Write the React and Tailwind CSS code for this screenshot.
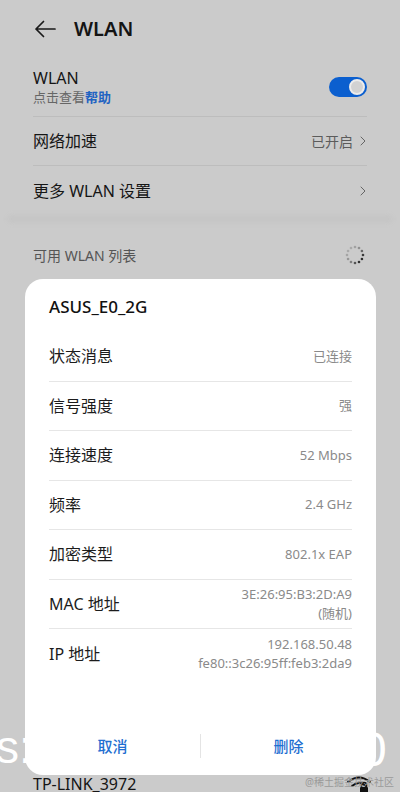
import { ChevronRight } from 'lucide-react';

const FONT = { fontFamily: '"Noto Sans", "Noto Sans CJK SC", sans-serif' };

const details = [
  { label: '状态消息', value: ['已连接'] },
  { label: '信号强度', value: ['强'] },
  { label: '连接速度', value: ['52 Mbps'] },
  { label: '频率', value: ['2.4 GHz'] },
  { label: '加密类型', value: ['802.1x EAP'] },
  { label: 'MAC 地址', value: ['3E:26:95:B3:2D:A9', '(随机)'] },
  { label: 'IP 地址', value: ['192.168.50.48', 'fe80::3c26:95ff:feb3:2da9'] },
];

function Spinner() {
  const shades = [0.25, 0.35, 0.6, 0.85, 0.95, 0.9, 0.7, 0.45, 0.3, 0.22, 0.2, 0.2];
  return (
    <svg width="22" height="22" viewBox="0 0 22 22">
      {shades.map((s, i) => {
        const a = (i / 12) * Math.PI * 2 - Math.PI / 2;
        return (
          <circle key={i} cx={11 + Math.cos(a) * 8} cy={11 + Math.sin(a) * 8} r={1.3} fill="#222" opacity={s} />
        );
      })}
    </svg>
  );
}

function Toggle() {
  return (
    <div className="w-[38px] h-[20px] rounded-full bg-[#0b5fcf] flex items-center justify-end pr-[2px]">
      <div className="w-[16px] h-[16px] rounded-full bg-[#d2d2d2] border-[2px] border-[#ececec]" />
    </div>
  );
}

function WifiLock() {
  return (
    <svg width="26" height="20" viewBox="0 0 26 20" fill="none">
      <path d="M2 8 Q13 -1 24 8" stroke="#111" strokeWidth="2" strokeLinecap="round" />
      <path d="M6 12 Q13 6 20 12" stroke="#111" strokeWidth="2" strokeLinecap="round" />
      <rect x="14" y="13" width="8" height="7" rx="1" fill="#111" />
      <path d="M15.5 13 v-2 a2.5 2.5 0 0 1 5 0 v2" stroke="#111" strokeWidth="1.6" />
    </svg>
  );
}

export default function App() {
  return (
    <div className="relative w-[400px] h-[792px] overflow-hidden bg-[#cbcbcb]" style={FONT}>
      {/* Header */}
      <div className="h-[58px] flex items-center pl-[34px]">
        <svg width="22" height="18" viewBox="0 0 22 18" fill="none">
          <path d="M21 9H2M9.5 1.5L2 9l7.5 7.5" stroke="#1a1a1a" strokeWidth="1.7" strokeLinecap="round" strokeLinejoin="round" />
        </svg>
        <span className="ml-[18px] text-[20px] font-semibold text-[#141414]">WLAN</span>
      </div>

      {/* Settings group */}
      <div className="px-[33px]">
        <div className="h-[59px] flex items-center justify-between border-b border-[#bdbdbd]">
          <div>
            <p className="text-[16px] leading-[20px] text-[#151515]">WLAN</p>
            <p className="text-[13px] leading-[18px] text-[#666]">
              点击查看<span className="text-[#1f63c2] font-semibold">帮助</span>
            </p>
          </div>
          <Toggle />
        </div>
        <div className="h-[49px] flex items-center justify-between border-b border-[#bdbdbd]">
          <span className="text-[16px] text-[#151515]">网络加速</span>
          <div className="flex items-center gap-[2px] text-[14px] text-[#5c5c5c] -mr-[4px]">
            已开启
            <ChevronRight className="w-[16px] h-[16px] text-[#666]" strokeWidth={1.5} />
          </div>
        </div>
        <div className="h-[49px] flex items-center justify-between">
          <span className="text-[16px] text-[#151515]">更多 WLAN 设置</span>
          <ChevronRight className="w-[16px] h-[16px] text-[#666] -mr-[4px]" strokeWidth={1.5} />
        </div>
      </div>
      <div className="mx-[8px] h-[8px] rounded-full bg-[#c5c5c5] blur-[2px]" />

      {/* Available list */}
      <div className="h-[64px] flex items-center justify-between pl-[33px] pr-[34px]">
        <span className="text-[14px] text-[#555]">可用 WLAN 列表</span>
        <Spinner />
      </div>
      {/* rows hidden behind the dialog */}
      <div className="h-[459px]" />
      <div className="pl-[33px] pr-[28px] h-[76px] flex items-center justify-between">
        <span className="text-[16px] text-[#151515]">TP-LINK_3972</span>
        <WifiLock />
      </div>

      {/* Detail dialog */}
      <div className="absolute left-[25px] top-[279px] w-[351px] h-[496px] rounded-[18px] bg-white flex flex-col px-[24px]">
        <div className="h-[53px] flex items-center pt-[3px]">
          <span className="text-[17px] font-medium text-[#111]">ASUS_E0_2G</span>
        </div>
        {details.map((d, i) => (
          <div
            key={d.label}
            className={`h-[49.5px] flex items-center justify-between ${i < details.length - 1 ? 'border-b border-[#e6e6e6]' : ''}`}
          >
            <span className="text-[16px] text-[#1c1c1c]">{d.label}</span>
            <div className="text-right text-[13px] leading-[19px] text-[#8a8a8a]">
              {d.value.map((v) => (
                <p key={v}>{v}</p>
              ))}
            </div>
          </div>
        ))}
        <div className="mt-auto h-[56px] flex items-center -mx-[24px] pb-[2px]">
          <button className="flex-1 text-[15px] font-medium text-[#1f6fd1]">取消</button>
          <div className="w-px h-[24px] bg-[#e4e4e4]" />
          <button className="flex-1 text-[15px] font-medium text-[#1f6fd1]">删除</button>
        </div>
      </div>

      {/* Watermarks */}
      <div
        className="absolute inset-x-0 top-[724px] h-[60px] text-white leading-none pointer-events-none"
        style={{ fontFamily: '"Liberation Sans", sans-serif' }}
      >
        <span className="absolute left-[-4px] top-0 text-[46px]">s:/</span>
        <span className="absolute left-[296px] top-[14px] text-[34px]">,</span>
        <span className="absolute left-[313px] top-[14px] text-[34px]">,</span>
        <span className="absolute left-[333px] top-[14px] text-[34px]">,</span>
        <span className="absolute left-[360px] top-[2px] text-[48px]">0</span>
      </div>
      <div className="absolute right-[6px] bottom-[2px] text-[10px] text-[#9a9a9a] pointer-events-none">
        @稀土掘金技术社区
      </div>
    </div>
  );
}
